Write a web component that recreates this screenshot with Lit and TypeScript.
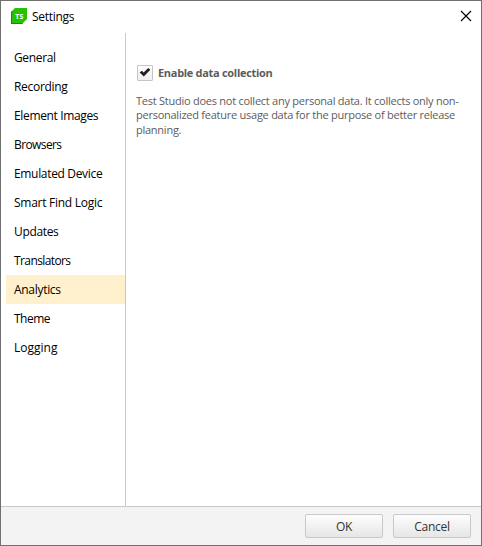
import { LitElement, html, css } from "lit";
import { customElement, state } from "lit/decorators.js";
import { classMap } from "lit/directives/class-map.js";
import { styleMap } from "lit/directives/style-map.js";

interface Page {
  name: string;
  tracking: number;
}

const PAGES: Page[] = [
  { name: "General", tracking: -0.35 },
  { name: "Recording", tracking: -0.3 },
  { name: "Element Images", tracking: -0.35 },
  { name: "Browsers", tracking: -0.6 },
  { name: "Emulated Device", tracking: -0.33 },
  { name: "Smart Find Logic", tracking: -0.27 },
  { name: "Updates", tracking: -0.35 },
  { name: "Translators", tracking: -0.6 },
  { name: "Analytics", tracking: -0.3 },
  { name: "Theme", tracking: -0.5 },
  { name: "Logging", tracking: 0 },
];

@customElement("app-root")
export class AppRoot extends LitElement {
  @state() private page = "Analytics";
  @state() private enabled = true;

  static styles = css`
    :host {
      display: flex;
      flex-direction: column;
      box-sizing: border-box;
      width: 482px;
      height: 546px;
      border: 1px solid #707070;
      background: #fff;
      color: #000;
      font: 12px/16px "Open Sans", "Noto Sans", sans-serif;
    }
    .titlebar {
      display: flex;
      align-items: center;
      flex: none;
      height: 32px;
      padding: 0 9px 0 10px;
    }
    .logo {
      flex: none;
      margin-right: 5px;
      margin-bottom: 2px;
    }
    .title {
      flex: 1;
      letter-spacing: -0.3px;
    }
    .close {
      flex: none;
      margin-bottom: 2px;
    }
    .body {
      display: flex;
      flex: 1;
      min-height: 0;
    }
    .nav {
      box-sizing: border-box;
      width: 125px;
      padding: 10px 0 0 5px;
      border-right: 1px solid #c8c8c8;
    }
    .item {
      height: 29px;
      padding-left: 8px;
      line-height: 29px;
      white-space: nowrap;
    }
    .selected {
      background: #fff0cd;
    }
    .content {
      flex: 1;
      padding: 31px 0 0 10px;
      color: #5c5c5c;
    }
    .option {
      display: flex;
      align-items: center;
      height: 18px;
    }
    .check {
      flex: none;
      box-sizing: border-box;
      width: 16px;
      height: 16px;
      margin: 0 5px 0 1px;
      border: 1px solid #c5c5c5;
      border-radius: 1px;
      background: linear-gradient(#fff, #efefef);
    }
    .check svg {
      display: block;
    }
    .label {
      font-size: 11px;
      font-weight: 700;
      letter-spacing: -0.3px;
    }
    .note {
      margin: 12px 0 0;
      font-size: 11px;
      line-height: 14.4px;
      letter-spacing: -0.25px;
      white-space: nowrap;
    }
    .footer {
      display: flex;
      flex: none;
      justify-content: flex-end;
      box-sizing: border-box;
      gap: 10px;
      height: 39px;
      padding: 7px 10px 0;
      border-top: 1px solid #c8c8c8;
      background: #f3f3f3;
    }
    .button {
      box-sizing: border-box;
      width: 78px;
      height: 24px;
      padding: 2px 0 0;
      border: 1px solid #c9c9c9;
      border-radius: 2px;
      background: linear-gradient(#fdfdfd, #e6e6e6);
      color: #333;
      font: inherit;
      letter-spacing: -0.3px;
    }
  `;

  render() {
    return html`
      <div class="titlebar">
        <svg class="logo" width="16" height="16" viewBox="0 0 16 16">
          <path d="M4 0H16V11L11 16H0V4Z" fill="#28c003" />
          <path d="M0 4L1 3V15H12L11 16H0Z" fill="#168a06" />
          <text x="8.3" y="11" text-anchor="middle" font-size="7" font-weight="700" fill="#fff">TS</text>
        </svg>
        <span class="title">Settings</span>
        <svg class="close" width="12" height="12" viewBox="0 0 12 12">
          <path d="M1 1L11 11M11 1L1 11" stroke="#000" stroke-width="1.1" />
        </svg>
      </div>
      <div class="body">
        <div class="nav">
          ${PAGES.map(
            ({ name, tracking }) => html`<div
              class=${classMap({ item: true, selected: name === this.page })}
              @click=${() => (this.page = name)}
            ><span style=${styleMap({ letterSpacing: `${tracking}px` })}>${name}</span></div>`
          )}
        </div>
        <div class="content">
          <div class="option" @click=${() => (this.enabled = !this.enabled)}>
            <span class="check">
              ${this.enabled
                ? html`<svg width="14" height="14" viewBox="0 0 14 14">
                    <path d="M1.6 6.6L4 4.8L5.6 6.4L10.2 2L12.4 3.8L5.8 10.6Z" fill="#222" />
                  </svg>`
                : null}
            </span>
            <span class="label">Enable data collection</span>
          </div>
          <p class="note">
            Test Studio does not collect any personal data. It collects only non-<br />personalized
            feature usage data for the purpose of better release<br />planning.
          </p>
        </div>
      </div>
      <div class="footer">
        <button class="button">OK</button>
        <button class="button">Cancel</button>
      </div>
    `;
  }
}
